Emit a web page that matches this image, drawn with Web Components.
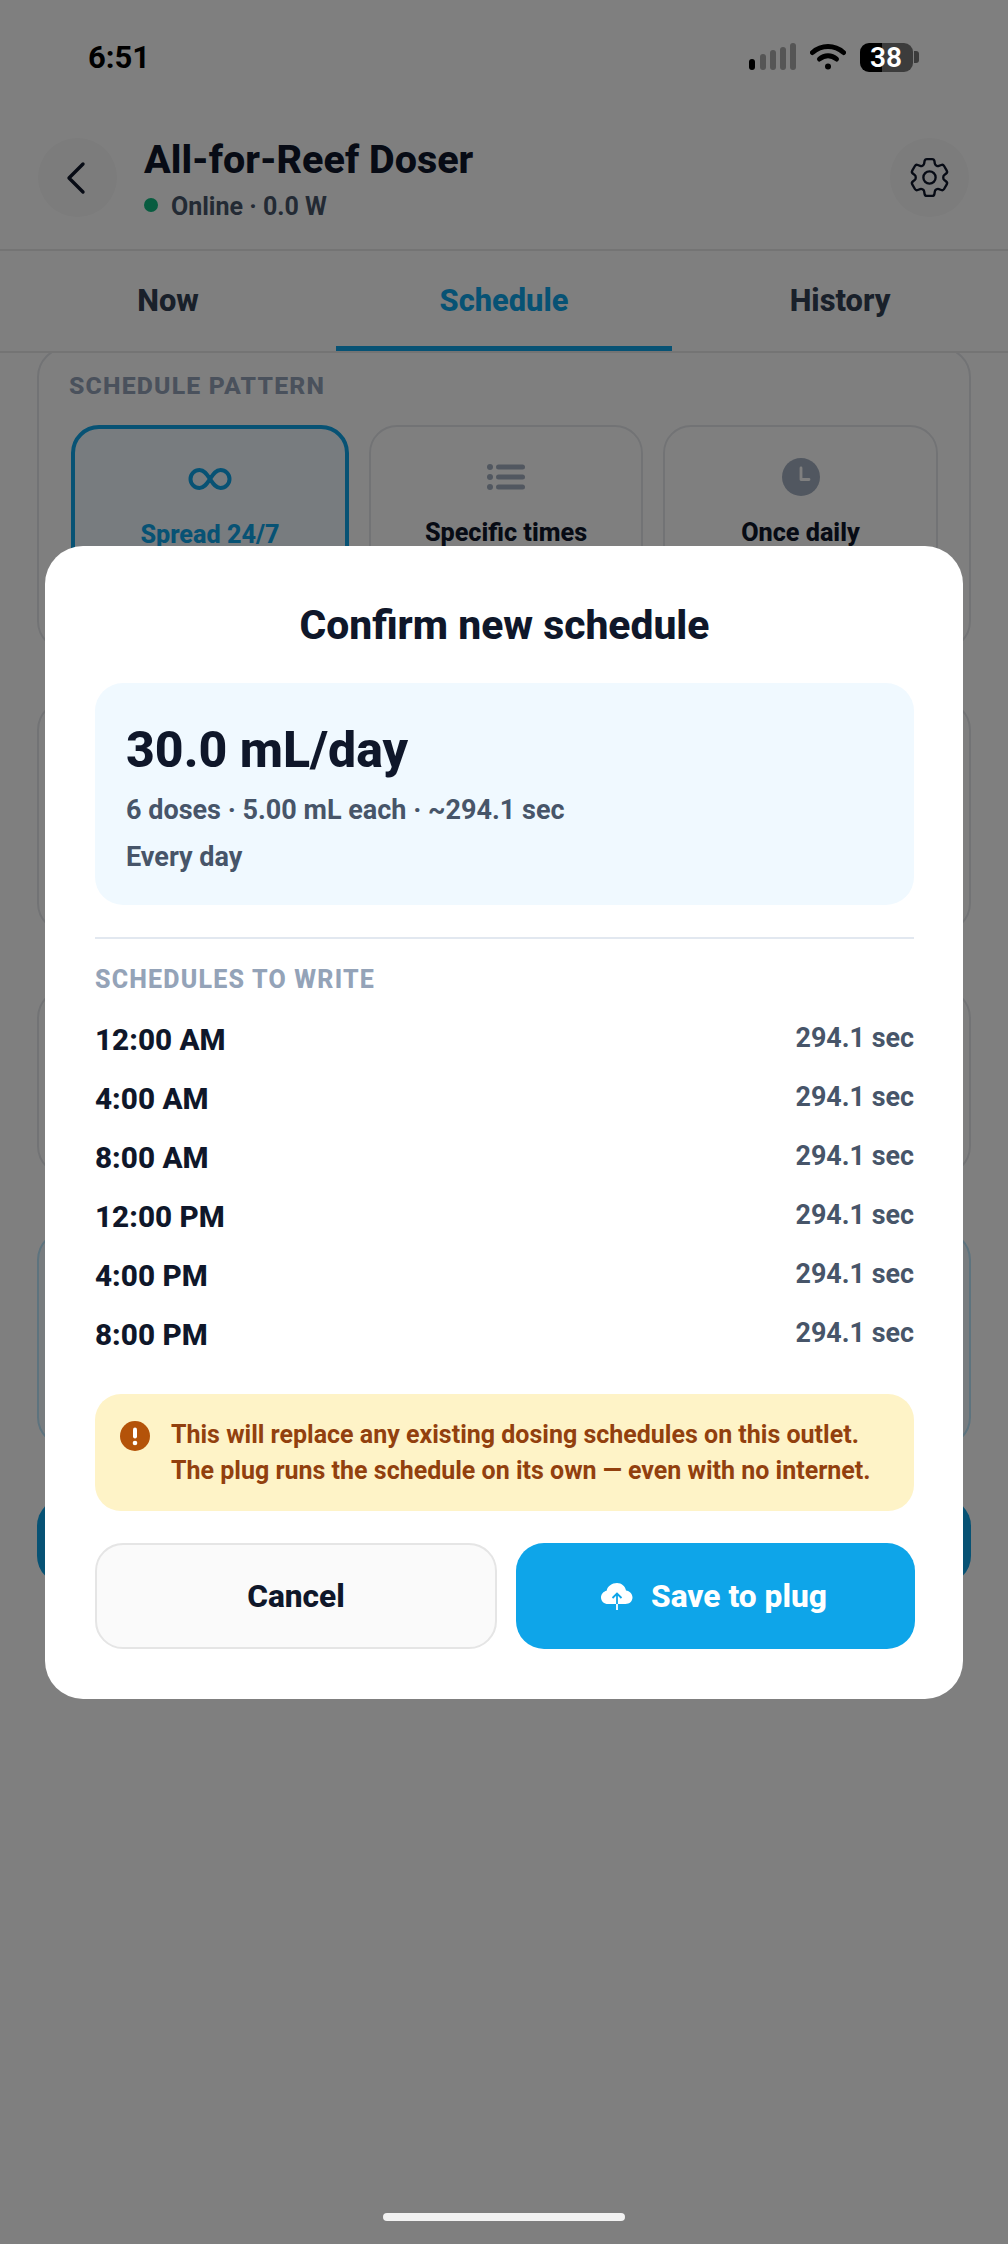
<!DOCTYPE html>
<html lang="en">
<head>
<meta charset="utf-8">
<title>All-for-Reef Doser</title>
<style>
html,body{margin:0;padding:0;background:#fff}
body{width:1008px;height:2244px;position:relative;overflow:hidden;font-family:Roboto,"Liberation Sans",sans-serif;color:#0f172a}
</style>
</head>
<body>
<x-status-bar></x-status-bar>
<x-app-header title="All-for-Reef Doser" status="Online · 0.0 W"></x-app-header>
<x-tabs></x-tabs>
<x-content>
  <x-card h="304" first>
    <x-section-label>SCHEDULE PATTERN</x-section-label>
    <x-pattern-grid>
      <x-pattern-option selected label="Spread 24/7" icon="infinity"></x-pattern-option>
      <x-pattern-option label="Specific times" icon="list"></x-pattern-option>
      <x-pattern-option label="Once daily" icon="clock"></x-pattern-option>
    </x-pattern-grid>
  </x-card>
  <x-card h="233" gap="49"></x-card>
  <x-card h="188" gap="55"></x-card>
  <x-card h="217" gap="54" tint></x-card>
  <x-primary-bar></x-primary-bar>
</x-content>
<x-scrim>
  <x-modal heading="Confirm new schedule">
    <x-summary amount="30.0 mL/day" detail="6 doses · 5.00 mL each · ~294.1 sec" days="Every day"></x-summary>
    <x-schedule-list label="SCHEDULES TO WRITE">
      <x-dose-row time="12:00 AM" dur="294.1 sec"></x-dose-row>
      <x-dose-row time="4:00 AM" dur="294.1 sec"></x-dose-row>
      <x-dose-row time="8:00 AM" dur="294.1 sec"></x-dose-row>
      <x-dose-row time="12:00 PM" dur="294.1 sec"></x-dose-row>
      <x-dose-row time="4:00 PM" dur="294.1 sec"></x-dose-row>
      <x-dose-row time="8:00 PM" dur="294.1 sec"></x-dose-row>
    </x-schedule-list>
    <x-warning>This will replace any existing dosing schedules on this outlet.<br>The plug runs the schedule on its own — even with no internet.</x-warning>
    <x-actions></x-actions>
  </x-modal>
</x-scrim>
<x-home-indicator></x-home-indicator>
<script>
function def(name, css, html){
  customElements.define(name, class extends HTMLElement{
    connectedCallback(){
      if(this.shadowRoot) return;
      const r=this.attachShadow({mode:'open'});
      const a=n=>this.getAttribute(n)||'';
      r.innerHTML='<style>'+css+'</style>'+(typeof html==='function'?html(a,this):html);
    }
  });
}
const ICONS={
  infinity:'<svg width="46" height="26" viewBox="0 0 46 26" fill="none" stroke="#0EA5E9" stroke-width="4" stroke-linecap="round"><path d="M23 13c-3-4.500-5.500-9-10.500-9a9 9 0 0 0 0 18c5 0 7.500-4.500 10.500-9s5.500-9 10.500-9a9 9 0 0 1 0 18c-5 0-7.500-4.500-10.500-9z"/></svg>',
  list:'<svg width="38" height="26" viewBox="0 0 38 26" fill="#a3afc0"><circle cx="3" cy="3" r="3"/><circle cx="3" cy="13" r="3"/><circle cx="3" cy="23" r="3"/><rect x="9" y=".5" width="29" height="5" rx="2.500"/><rect x="9" y="10.500" width="29" height="5" rx="2.500"/><rect x="9" y="20.500" width="29" height="5" rx="2.500"/></svg>',
  clock:'<svg width="38" height="38" viewBox="0 0 38 38"><circle cx="19" cy="19" r="19" fill="#a3afc0"/><path d="M19 10v11.500h8" fill="none" stroke="#fff" stroke-width="2.800" stroke-linecap="round" stroke-linejoin="round"/></svg>'
};
def('x-status-bar',
 `:host{display:flex;position:relative;z-index:3;height:114px;box-sizing:border-box;padding:0 89.500px 0 88px;align-items:center;justify-content:space-between;font-family:Roboto,sans-serif}
  .t{font-size:31px;font-weight:700;color:#000;letter-spacing:0;line-height:1}
  .r{display:flex;align-items:center}
  .bat{position:relative;width:53px;height:29px;border-radius:9px;background:linear-gradient(90deg,#000 22px,#3c3c3c 22px);color:#fff;font-size:28px;font-weight:600;display:flex;align-items:center;justify-content:center;margin-left:14px}
  .tip{width:5px;height:12px;border-radius:0 3px 3px 0;background:#3c3c3c;margin-left:1px}`,
 `<span class="t">6:51</span><span class="r">
  <svg width="47" height="28" viewBox="0 0 47 28"><rect x="0" y="16" width="6" height="11" rx="3" fill="#000"/><rect x="11" y="11" width="6" height="16" rx="3" fill="#555"/><rect x="21" y="7" width="6" height="20" rx="3" fill="#555"/><rect x="31" y="4" width="6" height="23" rx="3" fill="#555"/><rect x="41" y="0" width="6" height="27" rx="3" fill="#555"/></svg>
  <svg style="margin-left:14px" width="36" height="28" viewBox="0 0 36 28" fill="none" stroke="#000" stroke-width="5" stroke-linecap="round"><path d="M2.500 9.500C11.500 1.500 24.500 1.500 33.500 9.500"/><path d="M9.500 16C14.500 11.500 21.500 11.500 26.500 16"/><circle cx="18" cy="23.500" r="3" fill="#000" stroke="none"/></svg>
  <span class="bat">38</span><span class="tip"></span></span>`);
def('x-app-header',
 `:host{display:flex;align-items:center;height:137px;box-sizing:border-box;padding:0 39px 0 38px;border-bottom:2px solid #e8e8e8;background:#fff}
  .c{width:79px;height:79px;border-radius:50%;background:#f8f8f8;display:flex;align-items:center;justify-content:center;flex:none;position:relative;top:-4px}
  .b{padding-right:3px;box-sizing:border-box}
  .m{flex:1;margin-left:27px;margin-top:-3px}
  h1{margin:0;font-size:39.500px;font-weight:800;line-height:46px;color:#0f172a}
  .s{display:flex;align-items:center;font-size:25px;font-weight:700;color:#475569;line-height:32px;margin-top:8px}
  .d{width:14px;height:14px;border-radius:50%;background:#10b981;margin-right:13px;position:relative;top:-2px}`,
 (a)=>`<span class="c b"><svg width="24" height="34" viewBox="0 0 24 34" fill="none" stroke="#0f172a" stroke-width="3.400" stroke-linecap="round" stroke-linejoin="round"><path d="M19 3 5 17l14 14"/></svg></span>
  <div class="m"><h1>${a('title')}</h1><div class="s"><span class="d"></span>${a('status')}</div></div>
  <span class="c"><svg width="49" height="49" viewBox="0 0 24 24" fill="none" stroke="#0f172a" stroke-width="1.150" stroke-linecap="round" stroke-linejoin="round"><path d="M9.594 3.940c.09-.542.56-.94 1.110-.94h2.593c.55 0 1.020.398 1.110.94l.213 1.281c.063.374.313.686.645.870.074.04.147.083.22.127.325.196.72.257 1.075.124l1.217-.456a1.125 1.125 0 0 1 1.370.49l1.296 2.247a1.125 1.125 0 0 1-.26 1.431l-1.003.827c-.293.241-.438.613-.43.992a7.723 7.723 0 0 1 0 .255c-.008.378.137.75.43.991l1.004.827c.424.35.534.955.26 1.430l-1.298 2.247a1.125 1.125 0 0 1-1.369.491l-1.217-.456c-.355-.133-.75-.072-1.076.124a6.470 6.470 0 0 1-.22.128c-.331.183-.581.495-.644.869l-.213 1.281c-.09.543-.56.94-1.110.94h-2.594c-.55 0-1.019-.398-1.110-.94l-.213-1.281c-.062-.374-.312-.686-.644-.87a6.520 6.520 0 0 1-.22-.127c-.325-.196-.72-.257-1.076-.124l-1.217.456a1.125 1.125 0 0 1-1.369-.49l-1.297-2.247a1.125 1.125 0 0 1 .26-1.431l1.004-.827c.292-.24.437-.613.43-.991a6.932 6.932 0 0 1 0-.255c.007-.38-.138-.751-.43-.992l-1.004-.827a1.125 1.125 0 0 1-.26-1.430l1.297-2.247a1.125 1.125 0 0 1 1.370-.491l1.216.456c.356.133.751.072 1.076-.124.072-.044.146-.086.22-.128.332-.183.582-.495.644-.869l.214-1.280Z"/><circle cx="12" cy="12" r="3"/></svg></span>`);
def('x-tabs',
 `:host{display:grid;grid-template-columns:repeat(3,336px);height:102px;box-sizing:border-box;border-bottom:2px solid #e8e8e8;background:#fff;position:relative;z-index:1}
  div{display:flex;align-items:center;justify-content:center;font-size:30.800px;font-weight:800;color:#334155;box-sizing:border-box;height:100px;padding-bottom:2px}
  .on{color:#0EA5E9;border-bottom:5px solid #0EA5E9;padding-bottom:0;padding-top:3px}`,
 `<div>Now</div><div class="on">Schedule</div><div>History</div>`);
def('x-content',
 `:host{display:block;height:1891px;overflow:hidden;padding:0 37px;box-sizing:border-box}`,
 `<slot></slot>`);
customElements.define('x-card',class extends HTMLElement{
  connectedCallback(){
    if(this.shadowRoot) return;
    const r=this.attachShadow({mode:'open'});
    const tint=this.hasAttribute('tint');
    const first=this.hasAttribute('first');
    r.innerHTML=`<style>:host{display:block;box-sizing:border-box;height:${this.getAttribute('h')}px;margin-top:${first?-6:this.getAttribute('gap')}px;border:2px solid ${tint?'#bae6fd':'#e5e7eb'};background:${tint?'#f0f9ff':'#fff'};border-radius:30px;padding:${first?'22px 30px 0':'0'}}</style><slot></slot>`;
  }
});
def('x-section-label',
 `:host{display:block;font-size:24.800px;font-weight:800;letter-spacing:1.200px;color:#94A3B8;line-height:30px}`,
 `<slot></slot>`);
def('x-pattern-grid',
 `:host{display:grid;grid-template-columns:278px 274px 275px;column-gap:20px;margin:24px 0 0 2px;height:200px}`,
 `<slot></slot>`);
customElements.define('x-pattern-option',class extends HTMLElement{
  connectedCallback(){
    if(this.shadowRoot) return;
    const r=this.attachShadow({mode:'open'});
    const on=this.hasAttribute('selected');
    r.innerHTML=`<style>:host{display:flex;flex-direction:column;align-items:center;box-sizing:border-box;border-radius:28px;border:${on?'4.500px solid #0EA5E9':'2px solid #e5e7eb'};background:${on?'#f0f9ff':'#fff'};}
    .i{height:44px;margin-top:28px;display:flex;align-items:center;justify-content:center}
    .l{font-size:25.200px;font-weight:800;line-height:32px;margin-top:18px;color:${on?'#0EA5E9':'#0f172a'}}</style>
    <span class="i">${ICONS[this.getAttribute('icon')]}</span><span class="l">${this.getAttribute('label')}</span>`;
  }
});
def('x-primary-bar',
 `:host{display:block;height:86px;margin-top:51px;background:#0EA5E9;border-radius:28px}`,``);
def('x-scrim',
 `:host{position:absolute;inset:0;z-index:2;background:rgba(0,0,0,.5);display:flex;justify-content:center;align-items:flex-start;padding-top:546px;box-sizing:border-box}`,
 `<slot></slot>`);
def('x-modal',
 `:host{display:block;box-sizing:border-box;width:918px;height:1153px;background:#fff;border-radius:38px;padding:50px 49px 0 50px}
  h2{margin:0;text-align:center;font-size:40.800px;font-weight:800;line-height:58px;color:#0f172a}`,
 (a)=>`<h2>${a('heading')}</h2><slot></slot>`);
def('x-summary',
 `:host{display:block;box-sizing:border-box;height:222px;margin-top:29px;background:#f0f9ff;border-radius:28px;padding:38px 31px 0}
  .a{font-size:50px;font-weight:800;line-height:58px;color:#0f172a}
  .b{font-size:27px;font-weight:700;color:#475569;line-height:36px}
  .b1{margin-top:13px}.b2{margin-top:11px}`,
 (a)=>`<div class="a">${a('amount')}</div><div class="b b1">${a('detail')}</div><div class="b b2">${a('days')}</div>`);
def('x-schedule-list',
 `:host{display:block;margin-top:32px;border-top:2px solid #e2e8f0;padding-top:25px}
  .h{font-size:25px;font-weight:800;letter-spacing:1.200px;color:#94A3B8;line-height:32px;margin-bottom:14px}
  .l{display:flex;flex-direction:column}`,
 (a)=>`<div class="h">${a('label')}</div><div class="l"><slot></slot></div>`);
def('x-dose-row',
 `:host{display:flex;justify-content:space-between;align-items:center;height:59px}
  .t{font-size:29.700px;font-weight:800;color:#0f172a}
  .d{font-size:26.900px;font-weight:700;color:#475569;position:relative;top:-2px}`,
 (a)=>`<span class="t">${a('time')}</span><span class="d">${a('dur')}</span>`);
def('x-warning',
 `:host{display:flex;box-sizing:border-box;height:117px;margin-top:30px;background:#fef3c7;border-radius:26px;padding:23px 20px 0 25px;color:#92400E;font-size:25px;font-weight:700;line-height:36px}
  svg{flex:none;margin:4px 21px 0 0}`,
 `<svg width="30" height="30" viewBox="0 0 30 30"><circle cx="15" cy="15" r="15" fill="#B45309"/><rect x="13" y="6.500" width="4" height="11" rx="2" fill="#fff"/><circle cx="15" cy="22" r="2.300" fill="#fff"/></svg><div><slot></slot></div>`);
def('x-actions',
 `:host{display:grid;grid-template-columns:402px 399px;column-gap:19px;margin-top:32px}
  .b{box-sizing:border-box;height:106px;border-radius:28px;display:flex;align-items:center;justify-content:center;font-size:31.700px;font-weight:800}
  .c{background:#fafafa;border:2px solid #e5e5e5;color:#0f172a}
  .s{background:#0EA5E9;color:#fff;gap:18px;padding-right:3px}`,
 `<div class="b c">Cancel</div><div class="b s"><svg width="32" height="27" viewBox="0 0 32 27" fill="none"><path fill="#fff" d="M16 0c4.600 0 8.300 3.200 9 7.500 3.600.4 6.500 3.300 6.500 7 0 3.700-3 6.500-7 6.500H7c-3.900 0-7-2.700-7-6.500 0-3.400 2.400-6.100 5.600-6.800C6.600 3.200 10.900 0 16 0z"/><path d="M16 21V10.500M11.500 15 16 10.500l4.500 4.500" stroke="#0EA5E9" stroke-width="1.800"/><path d="M16 21v6" stroke="#fff" stroke-width="1.800"/></svg>Save to plug</div>`);
def('x-home-indicator',
 `:host{position:absolute;z-index:3;left:383px;top:2213px;width:242px;height:8px;border-radius:4px;background:#f2f2f2}`,``);
</script>
</body>
</html>
